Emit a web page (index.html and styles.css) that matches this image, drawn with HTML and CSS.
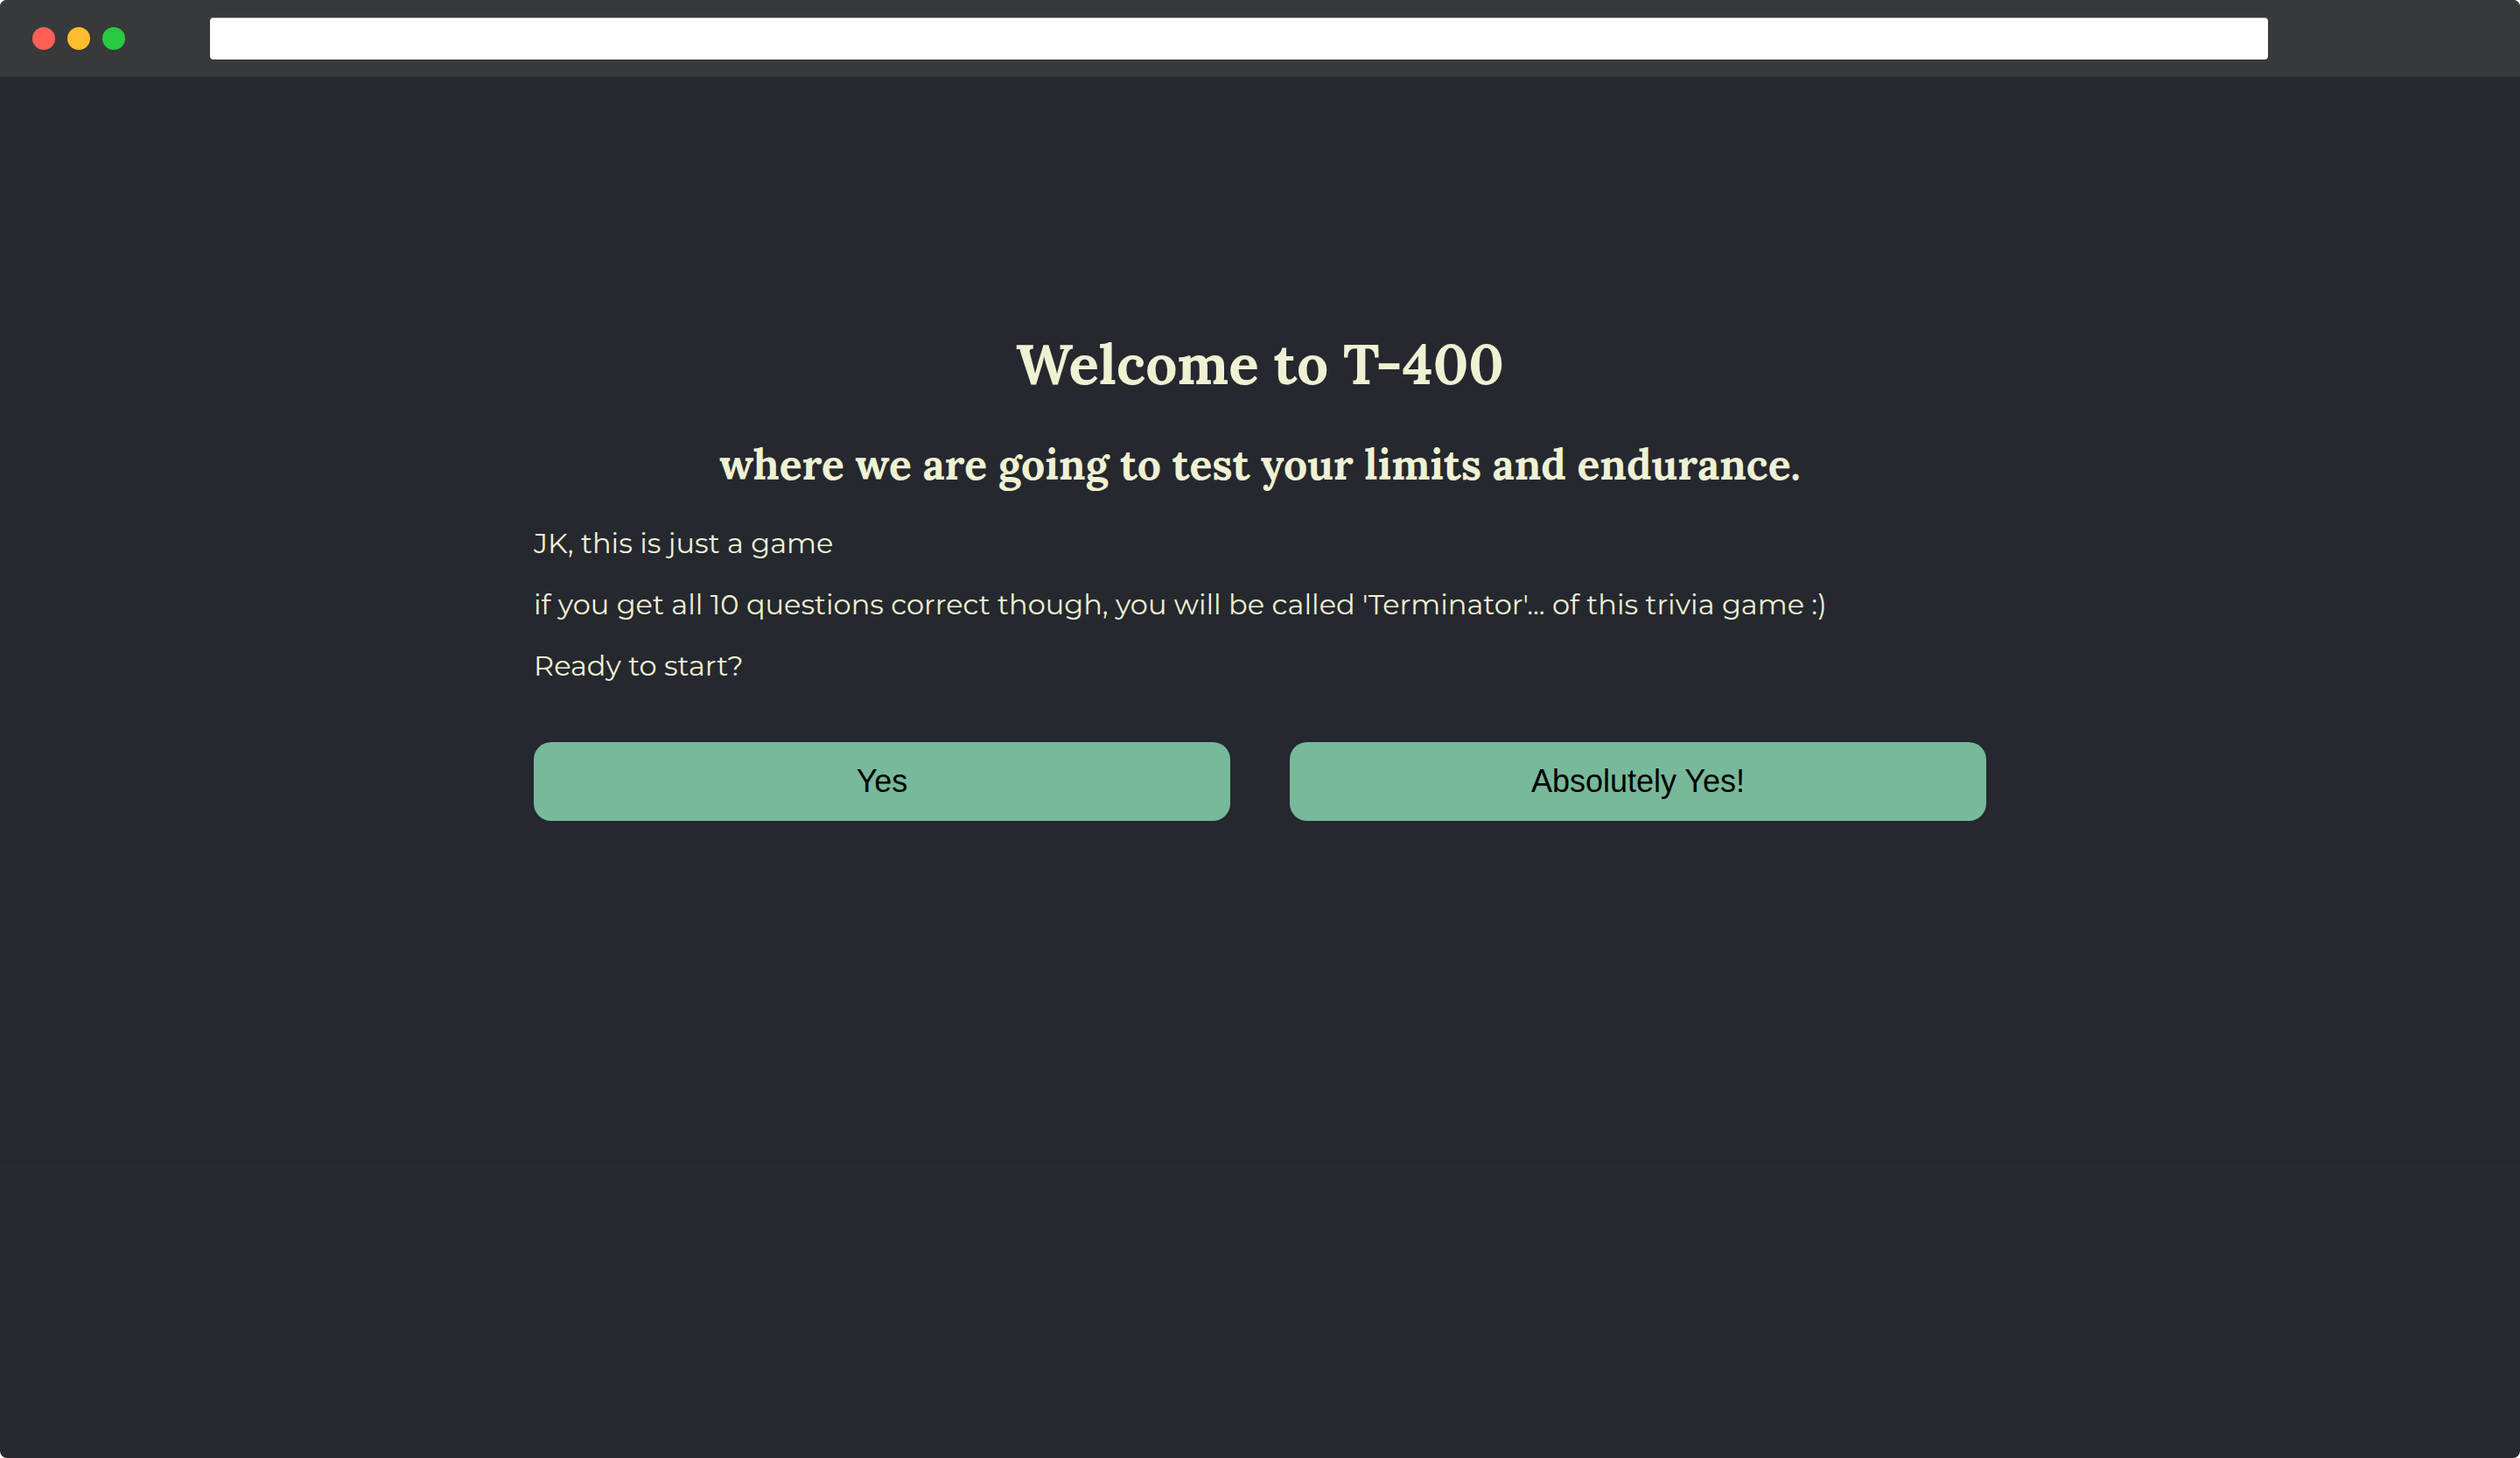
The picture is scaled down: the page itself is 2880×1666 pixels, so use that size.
FILE: index.html
```html
<!DOCTYPE html>
<html lang="en">
<head>
  <meta charset="utf-8">
  <title>T-400</title>
  <link rel="stylesheet" href="styles.css">
</head>
<body>
  <div class="window">
    <header class="toolbar">
      <div class="lights">
        <span class="light light-close"></span>
        <span class="light light-minimize"></span>
        <span class="light light-expand"></span>
      </div>
      <input class="address" type="text" aria-label="Address">
    </header>
    <main class="page">
      <section class="welcome">
        <h1 class="title">Welcome to T-400</h1>
        <h2 class="subtitle">where we are going to test your limits and endurance.</h2>
        <p class="text">JK, this is just a game</p>
        <p class="text">if you get all 10 questions correct though, you will be called 'Terminator'... of this trivia game :)</p>
        <p class="text">Ready to start?</p>
        <div class="actions">
          <button class="answer" type="button">Yes</button>
          <button class="answer" type="button">Absolutely Yes!</button>
        </div>
      </section>
    </main>
    <footer class="backdrop"></footer>
  </div>
</body>
</html>
```

FILE: styles.css
```css
* {
  box-sizing: border-box;
}

body {
  margin: 0;
  background: #fff;
}

.window {
  display: flex;
  flex-direction: column;
  min-height: 100vh;
  overflow: hidden;
  border-radius: 8px;
  background: #282831;
}

.toolbar {
  display: flex;
  align-items: center;
  height: 88px;
  padding: 0 288px 0 37px;
  background: #38393a;
}

.lights {
  display: flex;
  flex: none;
  gap: 14px;
  width: 203px;
}

.light {
  width: 26px;
  height: 26px;
  border-radius: 50%;
}

.light-close {
  background: #ff5f57;
}

.light-minimize {
  background: #ffbd2e;
}

.light-expand {
  background: #28ca42;
}

.address {
  flex: 1;
  min-width: 0;
  height: 48px;
  padding: 0 16px;
  border: 0;
  border-top: 1px solid #b4b4b8;
  border-radius: 4px;
  background: #fff;
  font: 28px "Liberation Sans", Arial, sans-serif;
}

.page {
  padding: 287px 40px 392px;
  background: #25282f;
  color: #f0f1d3;
}

.welcome {
  max-width: 1660px;
  margin: 0 auto;
}

.title,
.subtitle {
  margin: 0;
  font-family: Lora, "Liberation Serif", serif;
  font-weight: 700;
  text-align: center;
}

.title {
  margin-bottom: 43px;
  font-size: 64px;
  line-height: 82px;
}

.subtitle {
  margin-bottom: 40px;
  font-size: 48px;
  line-height: 62px;
}

.text {
  margin: 0 0 32px;
  font-family: Montserrat, Inter, sans-serif;
  font-size: 32px;
  font-weight: 400;
  line-height: 38px;
}

.actions {
  display: grid;
  grid-template-columns: 1fr 1fr;
  gap: 68px;
  margin-top: 68px;
}

.answer {
  height: 90px;
  border: 0;
  border-radius: 20px;
  background: #78b99b;
  color: #000;
  font: 36px "Liberation Sans", Arial, sans-serif;
}

.backdrop {
  flex: 1;
}
```
